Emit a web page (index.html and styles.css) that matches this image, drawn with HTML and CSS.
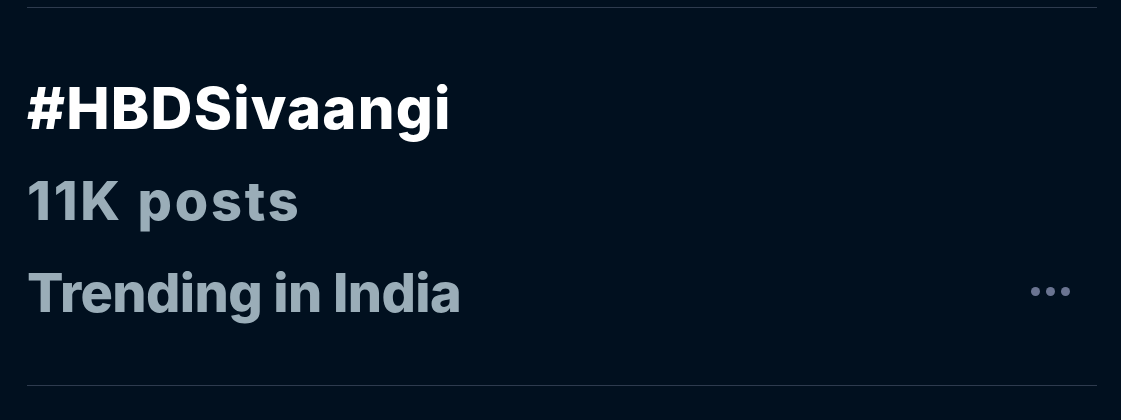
FILE: index.html
```html
<!DOCTYPE html>
<html>
<head>
<meta charset="utf-8">
<link rel="stylesheet" href="styles.css">
</head>
<body>
<div class="page">
  <div class="divider"></div>
  <div class="trend">
    <div class="trend-text">
      <div class="tag">#HBDSivaangi</div>
      <div class="meta count">11K posts</div>
      <div class="meta">Trending in India</div>
    </div>
    <div class="more" aria-label="More">
      <span class="dot"></span><span class="dot"></span><span class="dot"></span>
    </div>
  </div>
  <div class="divider"></div>
</div>
</body>
</html>
```
FILE: styles.css
```css
html, body {
  margin: 0;
  padding: 0;
  background: #01101f;
}
body {
  width: 1121px;
  height: 420px;
  overflow: hidden;
  font-family: "Inter", "Liberation Sans", sans-serif;
}
.page {
  padding: 7px 24px 0 27px;
}
.divider {
  height: 1px;
  background: #2e3b4e;
}
.trend {
  display: flex;
  align-items: flex-end;
  justify-content: space-between;
  height: 377px;
}
.trend-text {
  display: flex;
  flex-direction: column;
  padding-bottom: 46px;
}
.tag {
  color: #ffffff;
  font-weight: 800;
  font-size: 58px;
  line-height: 93px;
  letter-spacing: 1.2px;
}
.meta {
  color: #9aadb8;
  font-weight: 800;
  font-size: 54px;
  line-height: 92px;
  letter-spacing: -0.6px;
}
.count {
  letter-spacing: 2.8px;
}
.more {
  display: flex;
  gap: 6px;
  margin-right: 27px;
  margin-bottom: 89px;
}
.dot {
  width: 9px;
  height: 9px;
  border-radius: 50%;
  background: #6a7491;
}
```
